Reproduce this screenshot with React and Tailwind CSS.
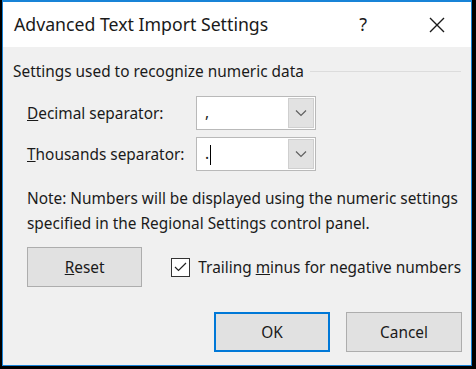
import React from 'react';

const Chevron = () => (
  <svg width="12" height="8" viewBox="0 0 12 8" fill="none">
    <path d="M1 1.5 L6 6.5 L11 1.5" stroke="#606060" strokeWidth="1.2" />
  </svg>
);

const Combo = ({ value }) => (
  <div className="flex h-[34px] w-[120px] border border-[#b9b9b9] bg-white">
    <div className="flex-1 pl-[8px] pt-[6px] text-[15.4px] leading-[20px]">{value}</div>
    <div className="m-[1px] flex w-[26px] items-center justify-center border border-[#cfcfcf] bg-[#e2e2e2]">
      <Chevron />
    </div>
  </div>
);

const Button = ({ children, primary }) => (
  <button
    className={
      primary
        ? 'flex h-[40px] w-[116px] items-center justify-center border-2 border-[#0078d7] bg-[#e1e1e1] text-[15.4px]'
        : 'flex h-[40px] w-[116px] items-center justify-center border border-[#adadad] bg-[#e1e1e1] text-[15.4px]'
    }
  >
    {children}
  </button>
);

export default function App() {
  return (
    <div className="h-[369px] w-[476px] bg-black pb-[3px] pl-[2px] pr-[4px]" style={{ fontFamily: '"Noto Sans", "Open Sans", sans-serif' }}>
      <div className="flex h-full flex-col border border-t-2 border-[#1883d7] text-[#1a1a1a]">
        {/* Title bar */}
        <div className="flex h-[45px] shrink-0 items-center bg-white pl-[11px] pr-[26px]">
          <span className="flex-1 text-[17.7px]">Advanced Text Import Settings</span>
          <span className="mr-[62px] text-[18px]">?</span>
          <svg width="16" height="16" viewBox="0 0 16 16">
            <path d="M1 1 L15 15 M15 1 L1 15" stroke="#1a1a1a" strokeWidth="1.4" />
          </svg>
        </div>

        {/* Body */}
        <div className="flex flex-1 flex-col bg-[#f0f0f0] pl-[10px] pr-[10px] text-[15.4px]">
          <div className="mt-[13px] flex items-center gap-[6px]">
            <span className="whitespace-nowrap">Settings used to recognize numeric data</span>
            <div className="h-px flex-1 bg-[#dcdcdc]" />
          </div>

          <div className="ml-[14px] mt-[13px] flex flex-col gap-[7px]">
            <div className="flex items-center">
              <span className="w-[169px]"><u>D</u>ecimal separator:</span>
              <Combo value="," />
            </div>
            <div className="flex items-center">
              <span className="w-[169px]"><u>T</u>housands separator:</span>
              <Combo value={<span>.<span className="ml-[1px] inline-block h-[20px] w-px bg-black align-middle" /></span>} />
            </div>
          </div>

          <p className="ml-[14px] mt-[15px] whitespace-nowrap leading-[25px]">
            Note: Numbers will be displayed using the numeric settings
            <br />
            specified in the Regional Settings control panel.
          </p>

          <div className="ml-[14px] mt-[11px] flex items-center">
            <Button><span><u>R</u>eset</span></Button>
            <div className="ml-[29px] flex items-center gap-[8px] whitespace-nowrap">
              <div className="flex h-[19px] w-[19px] items-center justify-center border border-[#333] bg-white">
                <svg width="13" height="10" viewBox="0 0 13 10" fill="none">
                  <path d="M1 5 L4.5 8.5 L12 1" stroke="#222" strokeWidth="1.2" />
                </svg>
              </div>
              <span>Trailing <u>m</u>inus for negative numbers</span>
            </div>
          </div>

          <div className="-mr-[1px] mt-[25px] flex justify-end gap-[16px]">
            <Button primary>OK</Button>
            <Button>Cancel</Button>
          </div>
        </div>
      </div>
    </div>
  );
}
